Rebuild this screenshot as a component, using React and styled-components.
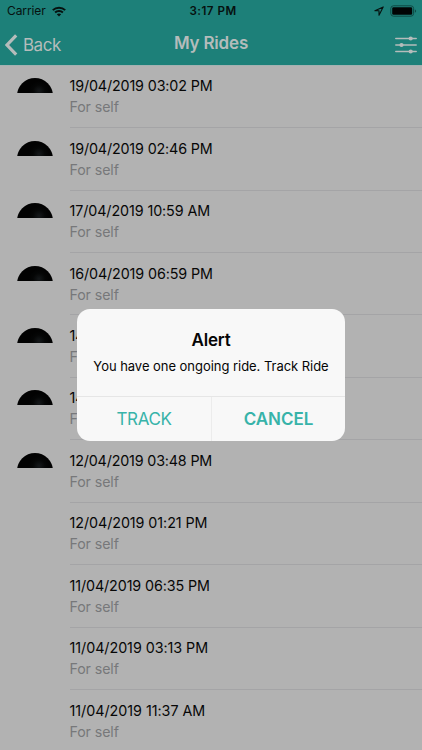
import React from "react";
import styled, { createGlobalStyle } from "styled-components";

const Global = createGlobalStyle`
  * { box-sizing: border-box; }
  body {
    margin: 0;
    background: #b2b2b2;
    font-family: Inter, "Liberation Sans", sans-serif;
    overflow: hidden;
  }
  button { font: inherit; border: 0; background: none; padding: 0; margin: 0; color: inherit; }
`;

const Screen = styled.div`
  position: relative;
  width: 422px;
  height: 750px;
  overflow: hidden;
  background: #b2b2b2;
`;

const Header = styled.header`
  height: 65px;
  margin-bottom: 0.7px;
  background: #1d8079;
  box-shadow: 0 1px 0 #a3b2b2;
`;

const StatusBar = styled.div`
  display: grid;
  grid-template-columns: 1fr auto 1fr;
  align-items: center;
  height: 22px;
  padding: 0 5px 0 7px;
  color: #06110f;
  font-size: 12px;
  line-height: 22px;
`;

const StatusGroup = styled.div`
  display: flex;
  align-items: center;
  justify-content: ${(p) => (p.$end ? "flex-end" : "flex-start")};
  gap: 6px;
  letter-spacing: -0.1px;
`;

const Clock = styled.span`
  font-weight: 600;
  font-size: 11.6px;
  letter-spacing: 0.5px;
  padding-left: 2px;
`;

const NavBar = styled.nav`
  display: grid;
  grid-template-columns: 1fr auto 1fr;
  align-items: center;
  height: 43px;
  padding: 0 5px 0 5px;
  color: #b5bcbb;
`;

const BackButton = styled.button`
  display: flex;
  align-items: center;
  gap: 5px;
  font-size: 17px;
  line-height: 22px;
  letter-spacing: -0.5px;
  padding-top: 2px;
`;

const Title = styled.h1`
  margin: 0;
  padding-bottom: 1px;
  font-size: 17px;
  line-height: 22px;
  font-weight: 600;
  letter-spacing: -0.2px;
`;

const FilterButton = styled.button`
  display: flex;
  justify-self: end;
  padding-top: 3px;
`;

const Icon = styled.svg`
  display: block;
  flex: none;
`;

const RideList = styled.ul`
  list-style: none;
  margin: 0;
  padding: 0;
`;

const Ride = styled.li`
  display: flex;
  height: 62.45px;
  padding-left: 17px;
`;

const AvatarSlot = styled.div`
  width: 52.5px;
  flex: none;
  padding-top: 12.6px;
`;

const Avatar = styled.div`
  width: 36px;
  height: 15px;
  overflow: hidden;

  &::before {
    content: "";
    display: block;
    width: 36px;
    height: 36px;
    border-radius: 50%;
    background: radial-gradient(circle at 22px 13px, #15181a 0, #050606 6px, #020202 10px);
  }
`;

const RideInfo = styled.div`
  flex: 1;
  padding-top: 10.6px;
  border-bottom: 1px solid #a4a4a6;
`;

const RideDate = styled.div`
  font-size: 14.3px;
  line-height: 20px;
  color: #070707;
  letter-spacing: ${(p) => p.$tracking}px;
  white-space: nowrap;
`;

const RideFor = styled.div`
  padding-top: 1px;
  font-size: 14.2px;
  line-height: 20px;
  letter-spacing: -0.1px;
  color: #77787a;
`;

const Dialog = styled.section`
  position: absolute;
  left: 77px;
  top: 309.4px;
  width: 268px;
  height: 131.3px;
  border-radius: 13px;
  overflow: hidden;
  background: #f8f8f8;
  display: flex;
  flex-direction: column;
  text-align: center;
`;

const DialogBody = styled.div`
  flex: 1;
  padding-top: 19.6px;
  color: #050505;
`;

const DialogTitle = styled.h2`
  margin: 0;
  font-size: 17px;
  line-height: 22px;
  font-weight: 600;
  letter-spacing: -0.2px;
`;

const DialogText = styled.p`
  margin: 5px 0 0;
  font-size: 13px;
  line-height: 20px;
  letter-spacing: -0.04px;
  white-space: nowrap;
`;

const DialogActions = styled.div`
  display: grid;
  grid-template-columns: 1fr 1fr;
  height: 45px;
  border-top: 1px solid #e6e6e6;
`;

const DialogAction = styled.button`
  color: #37b3a9;
  font-size: 17px;
  line-height: 44px;
  letter-spacing: ${(p) => (p.$strong ? -0.05 : -0.4)}px;
  font-weight: ${(p) => (p.$strong ? 600 : 400)};

  & + & { border-left: 1px solid #ececec; }
`;

const rides = [
  { date: "19/04/2019 03:02 PM", avatar: true, tracking: -0.13 },
  { date: "19/04/2019 02:46 PM", avatar: true, tracking: -0.14 },
  { date: "17/04/2019 10:59 AM", avatar: true, tracking: -0.09 },
  { date: "16/04/2019 06:59 PM", avatar: true, tracking: -0.11 },
  { date: "14/04/2019 06:43 PM", avatar: true, tracking: 0 },
  { date: "14/04/2019 05:20 PM", avatar: true, tracking: 0 },
  { date: "12/04/2019 03:48 PM", avatar: true, tracking: -0.16 },
  { date: "12/04/2019 01:21 PM", tracking: -0.06 },
  { date: "11/04/2019 06:35 PM", tracking: -0.1 },
  { date: "11/04/2019 03:13 PM", tracking: -0.04 },
  { date: "11/04/2019 11:37 AM", tracking: -0.02 },
];

function WifiIcon() {
  return (
    <Icon width="14" height="11" viewBox="0 0 14 11" fill="none" stroke="#06110f" strokeWidth="2">
      <path d="M.8 4.1C4.2.8 9.8.8 13.2 4.1" />
      <path d="M3.1 6.5C5.2 4.5 8.8 4.5 10.9 6.5" />
      <path d="M4.8 8.2C6 7.1 8 7.1 9.2 8.2L7 10.5Z" fill="#06110f" stroke="none" />
    </Icon>
  );
}

function LocationIcon() {
  return (
    <Icon width="10" height="10" viewBox="0 0 10 10" fill="none" stroke="#06110f" strokeWidth="1.1" strokeLinejoin="round">
      <path d="M9.2.9L.9 4.8H5V9.2Z" />
    </Icon>
  );
}

function BatteryIcon() {
  return (
    <Icon width="27" height="12" viewBox="0 0 27 12">
      <rect x=".8" y=".8" width="22.8" height="10.4" rx="2.7" fill="none" stroke="#0e4944" strokeWidth="1" />
      <rect x="2.2" y="2.2" width="20" height="7.6" rx="1.3" fill="#010404" />
      <path d="M24.9 4.2Q27.3 6 24.9 7.8Z" fill="#0e4944" />
    </Icon>
  );
}

function BackIcon() {
  return (
    <Icon width="13" height="22" viewBox="0 0 13 22" fill="none" stroke="#b5bcbb" strokeWidth="3.2">
      <path d="M11.2 1.4L2 11L11.2 20.6" />
    </Icon>
  );
}

function FilterIcon() {
  return (
    <Icon width="22" height="18" viewBox="0 0 22 18" stroke="#b5bcbb" fill="#b5bcbb" strokeWidth="1.5" strokeLinecap="round">
      <path d="M.8 2.5H21.2M.8 9H21.2M.8 15.5H21.2" />
      <circle cx="15.7" cy="2.5" r="2.1" stroke="none" />
      <circle cx="6.5" cy="9" r="2.1" stroke="none" />
      <circle cx="15.7" cy="15.5" r="2.1" stroke="none" />
    </Icon>
  );
}

export default function App() {
  return (
    <Screen>
      <Global />
      <Header>
        <StatusBar>
          <StatusGroup>
            <span>Carrier</span>
            <WifiIcon />
          </StatusGroup>
          <Clock>3:17 PM</Clock>
          <StatusGroup $end>
            <LocationIcon />
            <BatteryIcon />
          </StatusGroup>
        </StatusBar>
        <NavBar>
          <BackButton>
            <BackIcon />
            Back
          </BackButton>
          <Title>My Rides</Title>
          <FilterButton aria-label="Filter">
            <FilterIcon />
          </FilterButton>
        </NavBar>
      </Header>
      <RideList>
        {rides.map((ride) => (
          <Ride key={ride.date}>
            <AvatarSlot>{ride.avatar && <Avatar />}</AvatarSlot>
            <RideInfo>
              <RideDate $tracking={ride.tracking}>{ride.date}</RideDate>
              <RideFor>For self</RideFor>
            </RideInfo>
          </Ride>
        ))}
      </RideList>
      <Dialog role="alertdialog">
        <DialogBody>
          <DialogTitle>Alert</DialogTitle>
          <DialogText>You have one ongoing ride. Track Ride</DialogText>
        </DialogBody>
        <DialogActions>
          <DialogAction>TRACK</DialogAction>
          <DialogAction $strong>CANCEL</DialogAction>
        </DialogActions>
      </Dialog>
    </Screen>
  );
}
